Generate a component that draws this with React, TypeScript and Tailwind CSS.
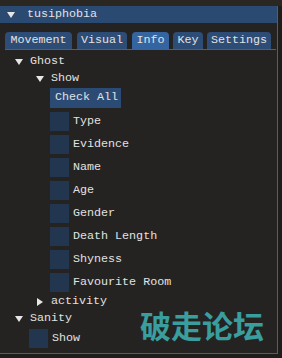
const mono = { fontFamily: '"Liberation Mono", "DejaVu Sans Mono", monospace' };

function Arrow(props: { open?: boolean; className?: string }) {
  return (
    <svg width="8" height="8" viewBox="0 0 8 8" className={props.className}>
      {props.open ? <polygon points="0,1 8,1 4,7" fill="#e6e6e6" /> : <polygon points="1,0 7,4 1,8" fill="#e6e6e6" />}
    </svg>
  );
}

const TABS = [
  { t: "Movement", cls: "w-[67px]" },
  { t: "Visual", cls: "ml-[5px] w-[50px]" },
  { t: "Info", cls: "ml-[5px] w-[37px]" },
  { t: "Key", cls: "ml-[4px] w-[30px]" },
  { t: "Settings", cls: "ml-[4px] w-[64px]" },
];
const FIELDS = ["Type", "Evidence", "Name", "Age", "Gender", "Death Length", "Shyness", "Favourite Room"];

function Check(props: { label: string; left: string }) {
  return (
    <div className={`flex h-[19px] items-center ${props.left}`}>
      <div className="h-[19px] w-[19px] bg-[#23364f]" />
      <span className="ml-[4px]">{props.label}</span>
    </div>
  );
}

export default function App() {
  return (
    <div className="relative h-[358px] w-[282px] overflow-hidden bg-[#1f1d1b] text-[11.7px] text-[#e2e2e2]" style={mono}>
      <div className="h-[6px] bg-[#2a2723]" />
      <div className="h-[348px] w-[278px] border-r border-b border-[#5c5c5c] bg-[#252321]">
        {/* title */}
        <div className="flex h-[17px] items-center bg-[#2b4a72]">
          <Arrow open className="ml-[7px]" />
          <span className="ml-[12px]">tusiphobia</span>
        </div>

        {/* tabs */}
        <div className="ml-[5px] mr-[1px] mt-[9px] flex h-[18px] border-b border-[#3565a0]">
          {TABS.map((t) => (
            <div
              key={t.t}
              className={`flex h-[17px] items-center justify-center rounded-t-[4px] ${t.cls} ${t.t === "Info" ? "bg-[#3565a0]" : "bg-[#2d4d77]"}`}
            >
              {t.t}
            </div>
          ))}
        </div>

        {/* tree */}
        <div className="mt-[3px]">
          <div className="flex h-[17px] items-center">
            <Arrow open className="ml-[15px]" />
            <span className="ml-[7px]">Ghost</span>
          </div>
          <div className="flex h-[17px] items-center">
            <Arrow open className="ml-[36px]" />
            <span className="ml-[7px]">Show</span>
          </div>
          <div className="ml-[50px] mt-[1px] flex h-[20px] w-[71px] items-center bg-[#2b4b75] pl-[5px]">Check All</div>
          <div className="mt-[4px] flex flex-col gap-[4px]">
            {FIELDS.map((f) => (
              <Check key={f} label={f} left="ml-[50px]" />
            ))}
          </div>
          <div className="mt-[1px] flex h-[17px] items-center">
            <Arrow className="ml-[36px]" />
            <span className="ml-[7px]">activity</span>
          </div>
          <div className="flex h-[17px] items-center">
            <Arrow open className="ml-[15px]" />
            <span className="ml-[7px]">Sanity</span>
          </div>
          <div className="mt-[2px]">
            <Check label="Show" left="ml-[29px]" />
          </div>
        </div>
      </div>

      {/* watermark */}
      <div
        className="absolute left-[140px] top-[304px] text-[31px] font-bold leading-[42px] text-[#3a9d9e]"
        style={{ fontFamily: '"Noto Sans CJK SC", sans-serif' }}
      >
        破走论坛
      </div>
    </div>
  );
}
